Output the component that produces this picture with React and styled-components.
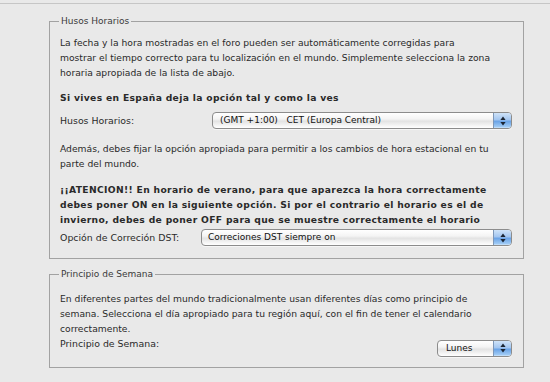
import React from 'react'
import styled, {createGlobalStyle} from 'styled-components'

const GlobalStyle = createGlobalStyle`
  html, body {
    margin: 0;
    background: #e9e9e9;
  }
  body {
    font-family: "DejaVu Sans", Verdana, sans-serif;
    color: #2a2a2a;
  }
`

const Page = styled.div`
  width: 550px;
  height: 382px;
  overflow: hidden;
`

const TopRule = styled.div`
  margin-top: 3px;
  border-top: 1px solid #c6c6c6;
`

const Panel = styled.div`
  padding: 0 26px 0 49px;
`

const Fieldset = styled.fieldset`
  margin: ${p => p.$top}px 0 0;
  padding: 0 10px ${p => p.$bottom}px;
  border: 1px solid #a2a2a2;
  min-width: 0;
`

const Legend = styled.legend`
  margin-left: -1px;
  padding: 0 2px;
  font-size: 9px;
  line-height: 12px;
  color: #3a3a3a;
`

const Para = styled.p`
  margin: ${p => p.$gap}px 0 0;
  font-size: 9.2px;
  line-height: 15px;
  font-weight: ${p => (p.$bold ? 700 : 400)};
  letter-spacing: ${p => (p.$bold ? 0.33 : 0)}px;
  white-space: nowrap;
`

const Row = styled.div`
  display: flex;
  align-items: ${p => p.$align || 'center'};
  margin-top: ${p => p.$gap}px;
  padding-right: 1px;
`

const Label = styled.span`
  font-size: 9.4px;
  line-height: 15px;
  white-space: nowrap;
`

const SelectBox = styled.div`
  margin-left: auto;
  margin-top: ${p => p.$offset || 0}px;
  width: ${p => p.$w}px;
  height: 17px;
  box-sizing: border-box;
  display: flex;
  border: 1px solid #8c8c8c;
  border-radius: 4px;
  overflow: hidden;
  background: linear-gradient(#ffffff 0%, #f4f4f4 40%, #e3e3e3 55%, #f6f6f6 85%, #ffffff 100%);
  box-shadow: 0 1px 0 rgba(255, 255, 255, 0.6);
`

const SelectText = styled.span`
  flex: 1;
  padding-left: ${p => p.$pad || 6}px;
  font-size: 9px;
  line-height: 15px;
  white-space: pre;
  color: #111;
`

const ArrowCap = styled.span`
  width: 17px;
  display: flex;
  align-items: center;
  justify-content: center;
  border-left: 1px solid #7d97b8;
  background: linear-gradient(#cfe3f8 0%, #a3c6f0 45%, #6aa3e6 55%, #9cc8f4 90%, #cfe6fb 100%);
`

const Arrows = () => (
  <svg width="6" height="10" viewBox="0 0 6 10">
    <path d="M3 0.5 L5.6 4 L0.4 4 Z" fill="#1b2533" />
    <path d="M3 9.5 L5.6 6 L0.4 6 Z" fill="#1b2533" />
  </svg>
)

const Select = ({w, pad, offset, children}) => (
  <SelectBox $w={w} $offset={offset}>
    <SelectText $pad={pad}>{children}</SelectText>
    <ArrowCap>
      <Arrows />
    </ArrowCap>
  </SelectBox>
)

const App = () => {
  return (
    <Page>
      <GlobalStyle />
      <TopRule />
      <Panel>
        <Fieldset $top={11} $bottom={12}>
          <Legend>Husos Horarios</Legend>
          <Para $gap={8}>
            La fecha y la hora mostradas en el foro pueden ser automáticamente corregidas para<br />
            mostrar el tiempo correcto para tu localización en el mundo. Simplemente selecciona la zona<br />
            horaria apropiada de la lista de abajo.
          </Para>
          <Para $gap={9.5} $bold>Si vives en España deja la opción tal y como la ves</Para>
          <Row $gap={7.5}>
            <Label>Husos Horarios:</Label>
            <Select w={300} pad={7}>{'(GMT +1:00)   CET (Europa Central)'}</Select>
          </Row>
          <Para $gap={11.5}>
            Además, debes fijar la opción apropiada para permitir a los cambios de hora estacional en tu<br />
            parte del mundo.
          </Para>
          <Para $gap={11.5} $bold>
            ¡¡ATENCION!! En horario de verano, para que aparezca la hora correctamente<br />
            debes poner ON en la siguiente opción. Si por el contrario el horario es el de<br />
            invierno, debes de poner OFF para que se muestre correctamente el horario
          </Para>
          <Row $gap={2}>
            <Label>Opción de Correción DST:</Label>
            <Select w={311} pad={6}>Correciones DST siempre on</Select>
          </Row>
        </Fieldset>

        <Fieldset $top={9} $bottom={10}>
          <Legend>Principio de Semana</Legend>
          <Para $gap={10.5}>
            En diferentes partes del mundo tradicionalmente usan diferentes días como principio de<br />
            semana. Selecciona el día apropiado para tu región aquí, con el fin de tener el calendario<br />
            correctamente.
          </Para>
          <Row $gap={0} $align="flex-start">
            <Label>Principio de Semana:</Label>
            <Select w={75} pad={8} offset={4}>Lunes</Select>
          </Row>
        </Fieldset>
      </Panel>
    </Page>
  )
}

export default App
